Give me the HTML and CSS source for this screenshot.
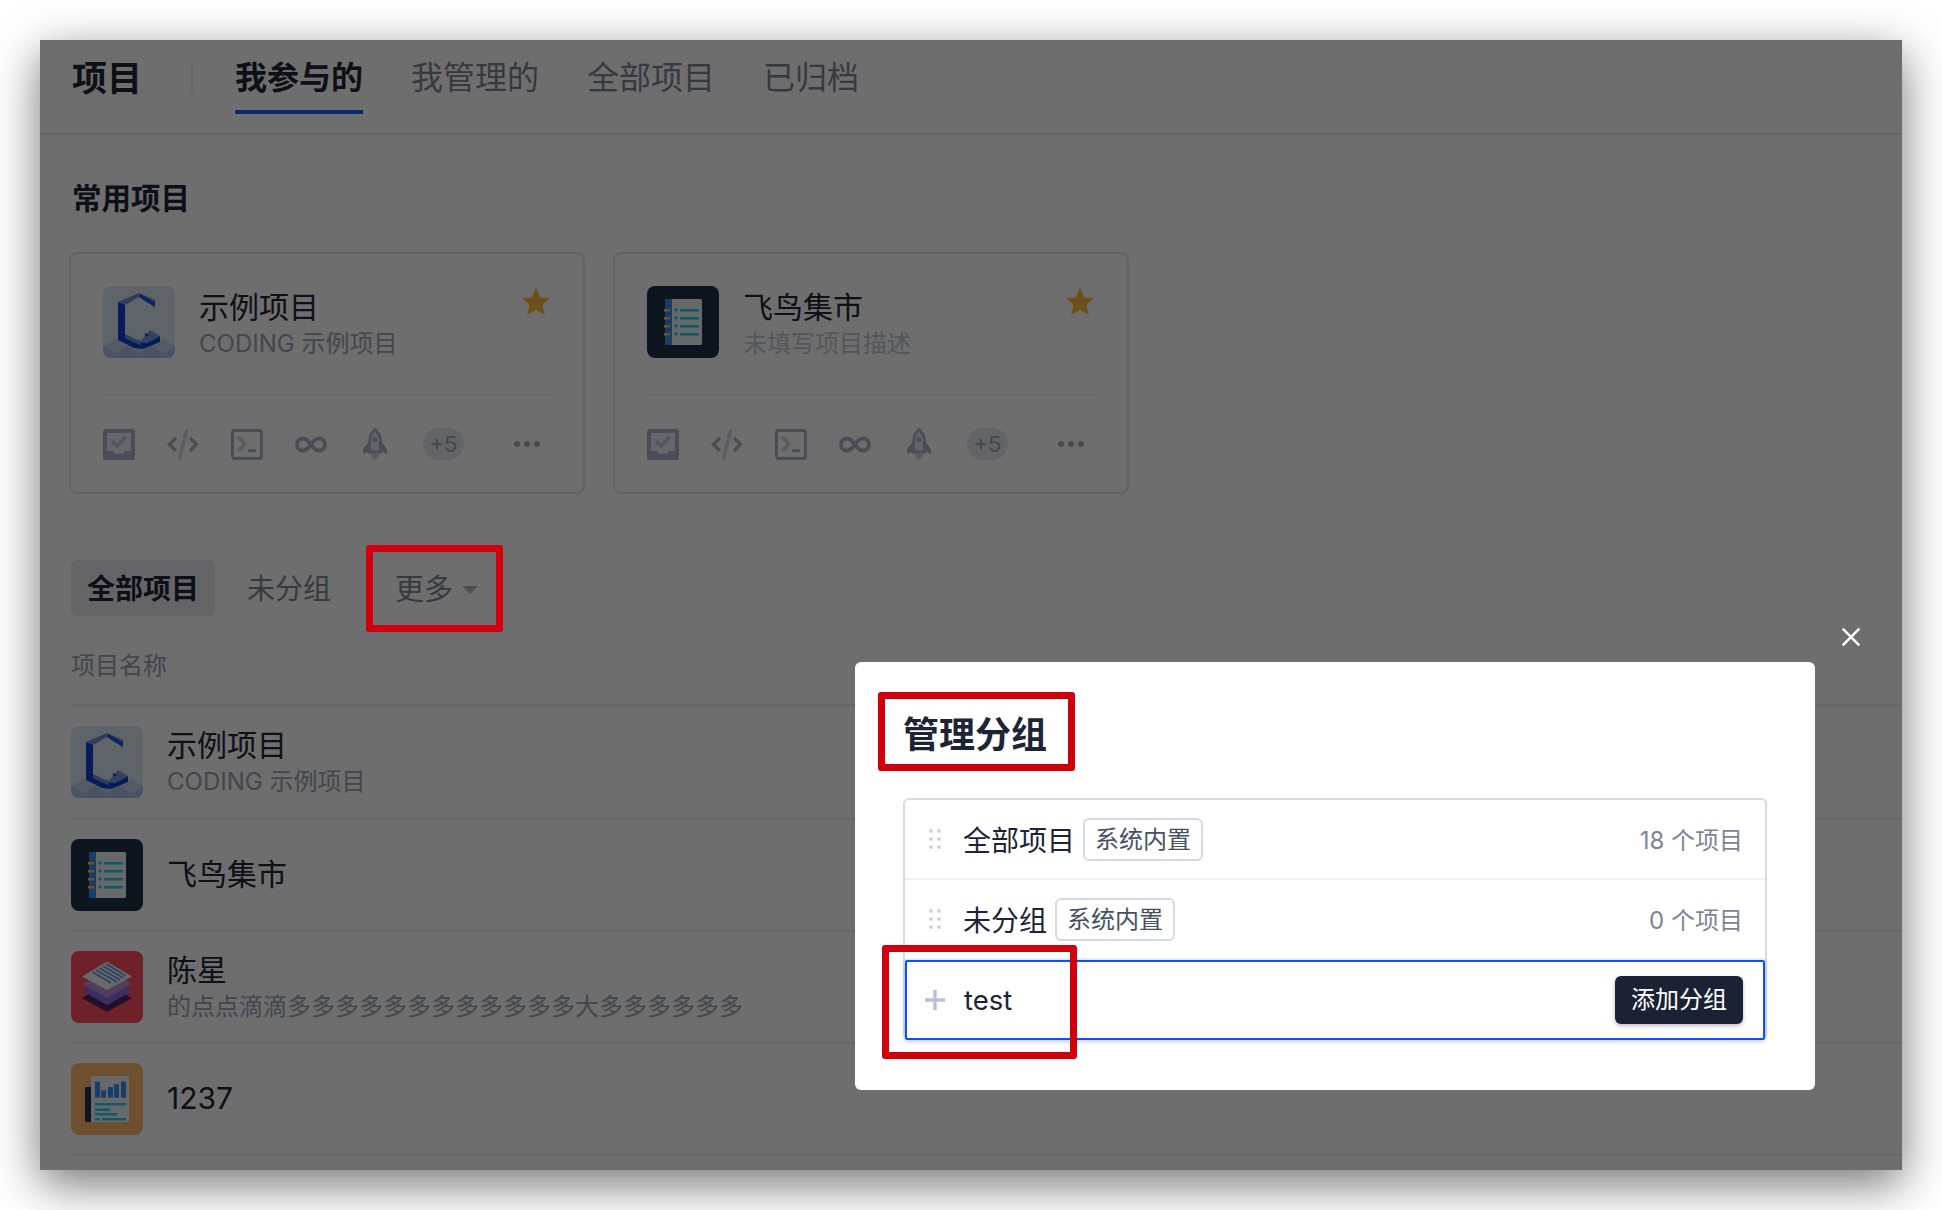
FILE: index.html
```html
<!DOCTYPE html>
<html lang="zh-CN">
<head>
<meta charset="utf-8">
<title>项目</title>
<link rel="stylesheet" href="styles.css">
</head>
<body>
<svg class="defs" xmlns="http://www.w3.org/2000/svg">
  <symbol id="logo-c" viewBox="0 0 72 72">
    <rect width="72" height="72" fill="#dde7f4"/>
    <path d="M0 60 12 52 24 60 36 52 48 60 60 52 72 60V72H0Z" fill="#c2d2ec"/>
    <path d="M0 60 12 68 24 60 36 68 48 60 60 68 72 60V72H0Z" fill="#a9c0e6"/>
    <path d="M15 16 36 7 52 14 52 21 36 11 22 19Z" fill="#6f90d6"/>
    <path d="M36 7 52 14 45 17 36 11Z" fill="#88a6e2"/>
    <path d="M36 11 52 21 52 16 37 8Z" fill="#1c50e0"/>
    <path d="M15 16 22 19V50L37 57 40 63 31 62 15 54Z" fill="#0d3fd0"/>
    <path d="M22 48 37 55 37 59 22 52Z" fill="#6f90d6"/>
    <path d="M37 56 47 44 57 50 44 57Z" fill="#7d9bde"/>
    <path d="M40 63 37 56 44 57 57 50V56Z" fill="#0d3fd0"/>
    <path d="M42 47 46 49 42 51Z" fill="#0d3fd0"/>
  </symbol>
  <symbol id="logo-book" viewBox="0 0 72 72">
    <rect width="72" height="72" fill="#1e3348"/>
    <rect x="18" y="13" width="37" height="46" rx="1.5" fill="#eef2f5"/>
    <rect x="18" y="13" width="7" height="46" rx="1" fill="#3a8cf0"/>
    <g fill="#ffc43c">
      <rect x="17" y="23" width="6" height="2.5"/><rect x="17" y="31" width="6" height="2.5"/>
      <rect x="17" y="39" width="6" height="2.5"/><rect x="17" y="47" width="6" height="2.5"/>
    </g>
    <g fill="#20cfe8">
      <rect x="27.5" y="22.5" width="3" height="3"/><rect x="33" y="23" width="19" height="2.5"/>
      <rect x="27.5" y="30.5" width="3" height="3"/><rect x="33" y="31" width="19" height="2.5"/>
      <rect x="27.5" y="38.5" width="3" height="3"/><rect x="33" y="39" width="19" height="2.5"/>
      <rect x="27.5" y="46.5" width="3" height="3"/><rect x="33" y="47" width="19" height="2.5"/>
    </g>
  </symbol>
  <symbol id="logo-stack" viewBox="0 0 72 72">
    <rect width="72" height="72" fill="#ff4d60"/>
    <path d="M11 47 36 33 61 47 36 61Z" fill="#4a2560"/>
    <path d="M11 40 36 26 61 40 36 54Z" fill="#8a6ce0"/>
    <path d="M11 33 36 19 61 33 36 47Z" fill="#bb90d8"/>
    <path d="M11 25.5 36 10.5 61 25.5 36 39Z" fill="#f2f5f8"/>
    <g stroke="#5f9ae8" stroke-width="1.6">
      <path d="M25 19 46 31M28.5 17 49 29M32 15 52.500 27M35.500 13 55 25M21.500 21 40 32"/>
    </g>
  </symbol>
  <symbol id="logo-chart" viewBox="0 0 72 72">
    <rect width="72" height="72" fill="#ffba6b"/>
    <rect x="14" y="24" width="7" height="35" rx="1" fill="#1e3348"/>
    <rect x="20" y="13" width="38" height="46" rx="1" fill="#eef2f5"/>
    <g fill="#3a8cf0">
      <rect x="24" y="18.700" width="5" height="16"/><rect x="30" y="27.300" width="5" height="7.400"/>
      <rect x="37" y="24" width="5" height="10.700"/><rect x="43" y="21.300" width="5" height="13.400"/>
      <rect x="50" y="18.700" width="5" height="16"/>
    </g>
    <g fill="#20cfe8">
      <rect x="24" y="40" width="31" height="2.400"/><rect x="24" y="45.500" width="15" height="2.400"/>
      <rect x="24" y="50" width="22" height="2.400"/><rect x="24" y="55" width="5" height="2.400"/>
      <rect x="31" y="55" width="24" height="2.400"/>
    </g>
  </symbol>
  <symbol id="i-task" viewBox="0 0 32 31">
    <path d="M2 2H30V29H2Z" fill="#ecEff6" stroke="#aeb2c8" stroke-width="4" stroke-linejoin="round"/>
    <path d="M4 22H10L12 25H20L22 22H28V28H4Z" fill="#aeb2c8"/>
    <path d="M9 12 14 17 23 8" fill="none" stroke="#c4c8d8" stroke-width="3.500"/>
  </symbol>
  <symbol id="i-code" viewBox="0 0 32 31">
    <path d="M19.500 2 12.500 29" stroke="#d6daea" stroke-width="3.500" stroke-linecap="round" fill="none"/>
    <path d="M9 9 2.500 15.500 9 22M23 9 29.500 15.500 23 22" fill="none" stroke="#aeb2c8" stroke-width="3.500"/>
  </symbol>
  <symbol id="i-term" viewBox="0 0 32 31">
    <rect x="1.500" y="1.500" width="29" height="28" rx="2" fill="none" stroke="#aeb2c8" stroke-width="3"/>
    <path d="M7 8 14 15 7 22" fill="none" stroke="#d0d4e4" stroke-width="3.500"/>
    <rect x="17" y="20" width="8" height="3.200" rx="1" fill="#aeb2c8"/>
  </symbol>
  <symbol id="i-inf" viewBox="0 0 32 31">
    <path d="M16 15.500C13 11 10.500 9.500 8 9.500 4.500 9.500 2 12 2 15.500S4.500 21.500 8 21.500C10.500 21.500 13 20 16 15.500 19 11 21.500 9.500 24 9.500 27.500 9.500 30 12 30 15.500S27.500 21.500 24 21.500C21.500 21.500 19 20 16 15.500Z" fill="none" stroke="#aeb2c8" stroke-width="3.800"/>
  </symbol>
  <symbol id="i-rocket" viewBox="0 0 26 32">
    <path d="M13 1.500C9 5 7.500 9 7.500 14V24H18.500V14C18.500 9 17 5 13 1.500Z" fill="#e4e7f2" stroke="#aeb2c8" stroke-width="2.800"/>
    <path d="M6.500 14 1 21V26L6.500 23.500ZM19.500 14 25 21V26L19.500 23.500Z" fill="#aeb2c8"/>
    <circle cx="13" cy="11.500" r="2.500" fill="#aeb2c8"/>
    <path d="M9 26H17C17 29 15 31.500 13 31.500S9 29 9 26Z" fill="#d0d4e2"/>
  </symbol>
  <symbol id="i-star" viewBox="0 0 28 27">
    <path d="M14 0 18 9.300 28 10.300 20.500 17 22.800 27 14 21.700 5.200 27 7.500 17 0 10.300 10 9.300Z" fill="#ffbc3c"/>
  </symbol>
</svg>

<div class="window">
  <header class="topbar">
    <h1 class="app-title">项目</h1>
    <span class="top-sep"></span>
    <nav class="tabs">
      <a class="tab tab-active">我参与的</a>
      <a class="tab">我管理的</a>
      <a class="tab">全部项目</a>
      <a class="tab">已归档</a>
    </nav>
  </header>

  <main class="content">
    <h2 class="section-title">常用项目</h2>
    <div class="cards">
      <article class="card">
        <div class="card-head">
          <svg class="logo"><use href="#logo-c"/></svg>
          <div class="card-info">
            <div class="card-name">示例项目</div>
            <div class="card-desc">CODING 示例项目</div>
          </div>
          <svg class="star"><use href="#i-star"/></svg>
        </div>
        <div class="card-tools">
          <svg class="tool"><use href="#i-task"/></svg>
          <svg class="tool"><use href="#i-code"/></svg>
          <svg class="tool"><use href="#i-term"/></svg>
          <svg class="tool"><use href="#i-inf"/></svg>
          <svg class="tool tool-rocket"><use href="#i-rocket"/></svg>
          <span class="plus-pill">+5</span>
          <span class="more-dots"><i></i><i></i><i></i></span>
        </div>
      </article>
      <article class="card">
        <div class="card-head">
          <svg class="logo"><use href="#logo-book"/></svg>
          <div class="card-info">
            <div class="card-name">飞鸟集市</div>
            <div class="card-desc card-desc-empty">未填写项目描述</div>
          </div>
          <svg class="star"><use href="#i-star"/></svg>
        </div>
        <div class="card-tools">
          <svg class="tool"><use href="#i-task"/></svg>
          <svg class="tool"><use href="#i-code"/></svg>
          <svg class="tool"><use href="#i-term"/></svg>
          <svg class="tool"><use href="#i-inf"/></svg>
          <svg class="tool tool-rocket"><use href="#i-rocket"/></svg>
          <span class="plus-pill">+5</span>
          <span class="more-dots"><i></i><i></i><i></i></span>
        </div>
      </article>
    </div>

    <div class="groups">
      <span class="group group-active">全部项目</span>
      <span class="group">未分组</span>
      <span class="group group-more">更多<i class="caret"></i></span>
    </div>

    <div class="list-head">项目名称</div>
    <div class="project project-first">
      <svg class="logo"><use href="#logo-c"/></svg>
      <div class="card-info">
        <div class="card-name">示例项目</div>
        <div class="card-desc">CODING 示例项目</div>
      </div>
    </div>
    <div class="project">
      <svg class="logo"><use href="#logo-book"/></svg>
      <div class="card-info"><div class="card-name">飞鸟集市</div></div>
    </div>
    <div class="project">
      <svg class="logo"><use href="#logo-stack"/></svg>
      <div class="card-info">
        <div class="card-name">陈星</div>
        <div class="card-desc">的点点滴滴多多多多多多多多多多多多大多多多多多多</div>
      </div>
    </div>
    <div class="project">
      <svg class="logo"><use href="#logo-chart"/></svg>
      <div class="card-info"><div class="card-name">1237</div></div>
    </div>
  </main>

  <div class="mask"></div>

  <svg class="close" viewBox="0 0 18 18"><path d="M1.500 1.500 16.500 16.500M16.500 1.500 1.500 16.500" stroke="#fff" stroke-width="2.200" fill="none"/></svg>

  <section class="modal">
    <h3 class="modal-title">管理分组</h3>
    <div class="group-list">
      <div class="group-row">
        <span class="drag"><i></i><i></i><i></i><i></i><i></i><i></i></span>
        <span class="group-name">全部项目</span>
        <span class="tag">系统内置</span>
        <span class="count">18 个项目</span>
      </div>
      <div class="group-row">
        <span class="drag"><i></i><i></i><i></i><i></i><i></i><i></i></span>
        <span class="group-name">未分组</span>
        <span class="tag">系统内置</span>
        <span class="count">0 个项目</span>
      </div>
      <div class="group-input">
        <svg class="plus" viewBox="0 0 20 20"><path d="M10 0V20M0 10H20" stroke="#b9c1d4" stroke-width="3.400" fill="none"/></svg>
        <span class="input-text">test</span>
        <button class="add-btn">添加分组</button>
      </div>
    </div>
  </section>

  <span class="mark mark-more"></span>
  <span class="mark mark-title"></span>
  <span class="mark mark-input"></span>
</div>
</body>
</html>
```

FILE: styles.css
```css
* { box-sizing: border-box; }
html, body { margin: 0; background: #fff; }
body {
  width: 1942px;
  height: 1210px;
  padding: 40px;
  overflow: hidden;
  font-family: Inter, "Noto Sans CJK SC", sans-serif;
  color: #1e2535;
}
.defs { display: none; }

.window {
  position: relative;
  width: 1862px;
  height: 1130px;
  overflow: hidden;
  background: #fff;
  box-shadow: 0 14px 44px rgba(0, 0, 0, .55);
}

/* top bar */
.topbar {
  display: flex;
  align-items: flex-start;
  height: 95px;
  padding: 0 32px;
  border-bottom: 2px solid #e6e8ee;
}
.app-title {
  margin: 16px 0 0;
  font-size: 35px;
  line-height: 44px;
  font-weight: 700;
}
.top-sep {
  width: 2px;
  height: 32px;
  margin: 22px 42px 0 49px;
  background: #eceef3;
}
.tabs { display: flex; gap: 48px; }
.tab {
  height: 74px;
  padding-top: 16px;
  font-size: 32px;
  line-height: 44px;
  color: #7c8698;
}
.tab-active {
  color: #1e2535;
  font-weight: 700;
  border-bottom: 4px solid #1f5fff;
}

/* content */
.content { padding-left: 30px; }
.section-title {
  margin: 44px 0 0;
  font-size: 29.500px;
  line-height: 38px;
  font-weight: 700;
  padding-left: 2px;
}
.cards { display: flex; gap: 28px; margin-top: 35px; }
.card {
  width: 516px;
  height: 242px;
  margin-left: -1px;
  padding: 32px 31px 0 32px;
  border: 2px solid #dfe3ec;
  border-radius: 8px;
}
.card + .card { margin-left: 0; }
.card-head {
  position: relative;
  display: flex;
  align-items: flex-start;
  height: 110px;
  border-bottom: 2px solid #eff1f5;
}
.logo {
  flex: none;
  width: 72px;
  height: 72px;
  border-radius: 8px;
}
.card-info { margin-left: 24px; }
.card-name {
  margin-top: 1px;
  font-size: 30px;
  line-height: 40px;
  color: #1e2535;
}
.card-desc {
  margin-top: 2px;
  font-size: 24px;
  line-height: 30px;
  color: #99a2b5;
}
.card-desc-empty { color: #c3c8d3; }
.star {
  position: absolute;
  top: 2px;
  right: 2px;
  width: 28px;
  height: 27px;
}
.card-tools {
  display: flex;
  align-items: center;
  gap: 32px;
  margin-top: 32px;
  height: 32px;
}
.tool { flex: none; width: 32px; height: 31px; }
.tool-rocket { width: 26px; height: 32px; margin-left: 3px; }
.plus-pill {
  width: 41px;
  height: 32px;
  margin-left: 3px;
  border-radius: 16px;
  background: #e4e7ee;
  color: #9ea4b6;
  font-size: 22px;
  line-height: 32px;
  text-align: center;
}
.more-dots { display: flex; gap: 4px; margin-left: 18px; }
.more-dots i {
  width: 6px;
  height: 6px;
  border-radius: 50%;
  background: #a8adc0;
}

/* group tabs */
.groups {
  display: flex;
  align-items: center;
  margin-top: 66px;
  margin-left: 1px;
  height: 56px;
}
.group {
  padding-top: 1px;
  font-size: 28px;
  line-height: 40px;
  color: #7c8698;
}
.group-active {
  width: 144px;
  height: 56px;
  margin-right: 32px;
  padding-top: 1px;
  border-radius: 6px;
  background: #e9ebf0;
  color: #1e2535;
  font-weight: 700;
  line-height: 56px;
  text-align: center;
}
.group-more {
  display: flex;
  align-items: center;
  margin-top: 2px;
  margin-left: 64px;
  font-size: 29px;
}
.caret {
  width: 0;
  height: 0;
  margin: 0 0 0 9px;
  border: 8px solid transparent;
  border-bottom-width: 0;
  border-top: 8px solid #b5b8c6;
}

/* list */
.list-head {
  height: 90px;
  margin-left: 1px;
  padding-top: 33px;
  font-size: 24px;
  line-height: 34px;
  color: #99a2b5;
  border-bottom: 2px solid #eceef3;
}
.project {
  display: flex;
  align-items: center;
  height: 112px;
  margin-left: 1px;
  border-bottom: 2px solid #eceef3;
}
.project-first { height: 114px; }
.project .card-name { margin-top: -3px; }
.project .card-desc { margin-top: 2px; }

/* overlay */
.mask {
  position: absolute;
  inset: 0;
  background: rgba(0, 0, 0, .57);
}
.close {
  position: absolute;
  left: 1801px;
  top: 587px;
  width: 20px;
  height: 20px;
}
.modal {
  position: absolute;
  left: 815px;
  top: 622px;
  width: 960px;
  height: 428px;
  padding: 0 48px;
  border-radius: 6px;
  background: #fff;
}
.modal-title {
  margin: 49px 0 39px;
  font-size: 36px;
  line-height: 48px;
  font-weight: 700;
  color: #1c2436;
}
.group-list {
  width: 864px;
  height: 242px;
  border: 2px solid #d5d9e5;
  border-radius: 6px;
}
.group-row {
  display: flex;
  align-items: center;
  height: 80px;
  padding: 0 22px 0 24px;
  border-bottom: 2px solid #eef0f5;
}
.drag {
  display: grid;
  grid-template-columns: 4px 4px;
  gap: 4px;
  flex: none;
  margin-right: 22px;
}
.drag i {
  width: 4px;
  height: 4px;
  border-radius: 50%;
  background: #d3d6dd;
}
.group-name { margin-top: 3px; font-size: 28px; line-height: 40px; color: #1c2436; }
.tag {
  width: 120px;
  height: 43px;
  margin-left: 8px;
  border: 2px solid #d5d9e5;
  border-radius: 6px;
  font-size: 24px;
  line-height: 40px;
  text-align: center;
  color: #465063;
}
.count {
  margin-left: auto;
  margin-bottom: 2px;
  font-size: 24px;
  color: #7c8598;
}
.group-input {
  display: flex;
  align-items: center;
  height: 80px;
  padding: 0 20px 0 18px;
  border: 2px solid #0a50ff;
  border-radius: 2px;
  box-shadow: 0 2px 4px rgba(60, 70, 100, .25);
}
.plus { flex: none; width: 20px; height: 20px; margin-right: 19px; }
.input-text { font-size: 27.500px; color: #1c2436; }
.add-btn {
  width: 128px;
  height: 48px;
  margin-left: auto;
  padding: 0;
  border: 0;
  border-radius: 6px;
  background: #1a2233;
  color: #fff;
  font: inherit;
  font-size: 24px;
  line-height: 44px;
  box-shadow: 0 2px 4px rgba(30, 40, 60, .3);
}

/* annotations */
.mark {
  position: absolute;
  border: 7px solid #d0000f;
  border-radius: 3px;
}
.mark-more { left: 326px; top: 505px; width: 137px; height: 87px; }
.mark-title { left: 838px; top: 652px; width: 197px; height: 79px; }
.mark-input { left: 842px; top: 905px; width: 195px; height: 114px; }
```
